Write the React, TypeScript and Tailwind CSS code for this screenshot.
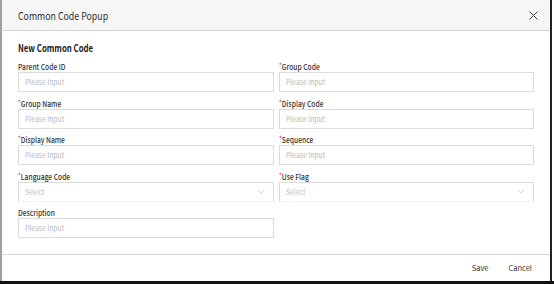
import React from "react";

const font = { fontFamily: '"Noto Sans CJK KR", "Noto Sans", sans-serif' };

function Label({ text, required }: { text: string; required?: boolean }) {
  return (
    <div className="h-[11px] text-[8px] leading-[11px] font-medium text-[#333] whitespace-nowrap">
      <span className="inline-block origin-left scale-x-[0.84]">
        {required && <span className="text-[#e53935] text-[7px] align-top leading-[8px]">*</span>}
        {text}
      </span>
    </div>
  );
}

function Input() {
  return (
    <div className="h-[20px] border border-[#dcdcdc] flex items-center px-[6px] text-[8px] text-[#b8b8b8] whitespace-nowrap">
      <span className="inline-block origin-left scale-x-[0.85]">Please Input</span>
    </div>
  );
}

function Select() {
  return (
    <div className="h-[20px] border border-[#dcdcdc] border-b-[#f3f3f3] flex items-center justify-between px-[6px] text-[8px] text-[#c2c2c2] whitespace-nowrap">
      <span className="inline-block origin-left scale-x-[0.85]">Select</span>
      <svg width="8" height="5" viewBox="0 0 8 5" className="mr-[2px]">
        <path d="M0.5 0.8 L4 4 L7.5 0.8" fill="none" stroke="#c8c8c8" strokeWidth="0.8" />
      </svg>
    </div>
  );
}

function Field({ label, required, kind }: { label: string; required?: boolean; kind?: "select" }) {
  return (
    <div className="flex flex-col">
      <Label text={label} required={required} />
      {kind === "select" ? <Select /> : <Input />}
    </div>
  );
}

export default function App() {
  return (
    <div className="w-[554px] h-[284px] bg-white border-b-[3px] border-[#111]" style={font}>
      <div className="w-[552px] h-full border-l-2 border-l-[#a0a0a0] border-r-2 border-r-[#222] flex flex-col bg-white">
        <div className="h-[31px] bg-[#f6f6f6] border-b border-[#d4d4d4] flex items-center justify-between pl-[16px] pr-[10px] shrink-0">
          <span className="inline-block origin-left scale-x-[0.8] text-[11px] text-[#333] whitespace-nowrap">Common Code Popup</span>
          <svg width="9" height="9" viewBox="0 0 9 9" className="mr-[2px]">
            <path d="M0.5 0.5 L8.5 8.5 M8.5 0.5 L0.5 8.5" stroke="#444" strokeWidth="1" />
          </svg>
        </div>
        <div className="flex-1 px-[16px] pt-[11px]">
          <div className="h-[12px] leading-[12px] text-[10px] font-bold text-[#222] whitespace-nowrap">
            <span className="inline-block origin-left scale-x-[0.78]">New Common Code</span>
          </div>
          <div className="mt-[7px] grid grid-cols-2 gap-x-[5px] gap-y-[5.5px]">
            <Field label="Parent Code ID" />
            <Field label="Group Code" required />
            <Field label="Group Name" required />
            <Field label="Display Code" required />
            <Field label="Display Name" required />
            <Field label="Sequence" required />
            <Field label="Language Code" required kind="select" />
            <Field label="Use Flag" required kind="select" />
            <Field label="Description" />
          </div>
        </div>
        <div className="h-[27px] border-t border-[#d4d4d4] flex items-center justify-end gap-[20px] pr-[18px] text-[7.5px] text-[#333] shrink-0">
          <span>Save</span>
          <span>Cancel</span>
        </div>
      </div>
    </div>
  );
}
